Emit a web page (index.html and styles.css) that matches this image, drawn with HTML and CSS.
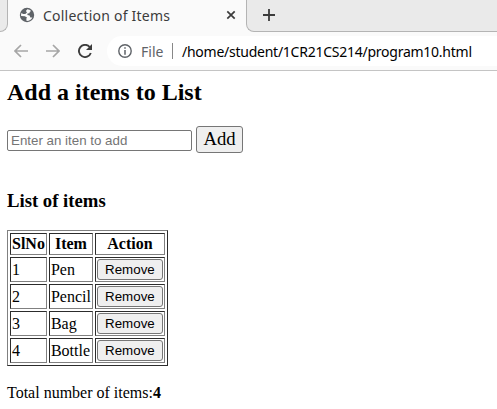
FILE: index.html
```html
<!DOCTYPE html>
<html lang="en">
<head>
<meta charset="utf-8">
<title>Collection of Items</title>
<link rel="stylesheet" href="styles.css">
</head>
<body>
<header class="browser">
  <div class="tabs">
    <div class="tab-before"></div>
    <div class="tab">
      <svg class="globe" width="16" height="16" viewBox="0 0 16 16"><circle cx="8" cy="8" r="7.2" fill="#5f6368"/><path d="M8.3 2.3 6.9 4.1 8 5.4 6.3 7H4.1L2.4 6.1A6 6 0 0 0 2.1 9l3.7.2 2.2 1.4-.7 1.2.3 2.3c2.8 0 4.7-1.4 5.8-3.5l-2-.1-.8-1.9-2.2-.7.1-1.4 1.9-.2.5-1.5 1.3-.8A6 6 0 0 0 8.3 2.3Z" fill="#fbfbfb"/></svg>
      <span class="tab-title">Collection of Items</span>
      <svg class="close" width="10" height="10" viewBox="0 0 10 10"><path d="m1.3 1.3 7.4 7.4m0-7.4L1.3 8.7" stroke="#3c3c3c" stroke-width="1.7"/></svg>
    </div>
    <div class="tab-after">
      <svg width="12" height="12" viewBox="0 0 12 12"><path d="M6 0v12M0 6h12" stroke="#3c3c3c" stroke-width="1.8"/></svg>
    </div>
  </div>
  <div class="toolbar">
    <svg class="arrow" width="14" height="14" viewBox="0 0 14 14"><path d="M14 7H1.5M7 1 1 7l6 6" fill="none" stroke="#a6a6a6" stroke-width="1.7"/></svg>
    <svg class="arrow forward" width="14" height="14" viewBox="0 0 14 14"><path d="M0 7h12.5M7 1l6 6-6 6" fill="none" stroke="#a6a6a6" stroke-width="1.7"/></svg>
    <svg class="reload" width="14" height="14" viewBox="0 0 14 14"><path d="M11.7 3A6.1 6.1 0 1 0 12.8 9" fill="none" stroke="#3c3c3c" stroke-width="1.9"/><path d="M14 0v6H8Z" fill="#3c3c3c"/></svg>
    <div class="address">
      <svg width="14" height="14" viewBox="0 0 14 14"><circle cx="7" cy="7" r="6.2" fill="none" stroke="#5f6368" stroke-width="1.4"/><path d="M7 3.2v1.5M7 6v4.7" stroke="#5f6368" stroke-width="1.5"/></svg>
      <span class="scheme">File</span>
      <span class="divider"></span>
      <span class="url">/home/student/1CR21CS214/program10.html</span>
    </div>
  </div>
</header>
<main>
  <h2>Add a items to List</h2>
  <div class="form"><input class="entry" type="text" placeholder="Enter an iten to add"> <button class="add">Add</button></div>
  <h3>List of items</h3>
  <table border="1">
    <tr><th>SlNo</th><th>Item</th><th>Action</th></tr>
    <tr><td>1</td><td>Pen</td><td><button>Remove</button></td></tr>
    <tr><td>2</td><td>Pencil</td><td><button>Remove</button></td></tr>
    <tr><td>3</td><td>Bag</td><td><button>Remove</button></td></tr>
    <tr><td>4</td><td>Bottle</td><td><button>Remove</button></td></tr>
  </table>
  <p>Total number of items:<b>4</b></p>
</main>
</body>
</html>
```
FILE: styles.css
```css
body {
  margin: 0;
  background: #fff;
  color: #000;
  font: 16px "Liberation Serif", serif;
  overflow: hidden;
}
svg { display: block; flex: none; }
.browser {
  height: 71px;
  box-sizing: border-box;
  border-bottom: 1px solid #c4c4c4;
  background: #fafafa;
  font-family: "Noto Sans", sans-serif;
  white-space: nowrap;
}
.tabs { display: flex; height: 32px; }
.tab-before, .tab-after {
  box-sizing: border-box;
  background: #eaeaea;
  border-bottom: 1px solid #b4b4b4;
}
.tab-before {
  width: 8px;
  border-right: 1px solid #b4b4b4;
  border-bottom-right-radius: 8px;
}
.tab {
  display: flex;
  width: 238px;
  height: 30px;
  align-items: center;
}
.globe { margin-left: 11px; }
.tab-title {
  width: 128px;
  margin-left: 8px;
  color: #3c3c3c;
  font-size: 14px;
  letter-spacing: 0.22px;
}
.close { margin-left: 55px; }
.tab-after {
  flex: 1;
  padding: 9px 0 0 16px;
  border-left: 1px solid #b4b4b4;
  border-bottom-left-radius: 8px;
}
.toolbar { display: flex; height: 38px; align-items: center; }
.arrow { margin-left: 14px; }
.forward { margin-left: 18px; }
.reload { margin-left: 18px; }
.address {
  display: flex;
  flex: 1;
  height: 30px;
  margin-left: 15px;
  padding-left: 11px;
  align-items: center;
  background: #fff;
  border-radius: 15px 0 0 15px;
  font-size: 14px;
}
.scheme { width: 31px; margin-left: 9px; color: #5f6368; }
.divider { width: 1px; height: 16px; background: #888; }
.url { margin-left: 9px; letter-spacing: -0.25px; }
main { padding: 8px 7px 0; }
h2 { margin: 0 0 20px; font-size: 24px; line-height: 27px; }
.form { display: flex; height: 27px; gap: 4px; }
input, button { box-sizing: border-box; font: 13.333px "Liberation Sans", sans-serif; }
.entry {
  width: 185px;
  height: 21px;
  margin: 4px 0 0;
  padding: 1px 3px;
  border: 1px solid #767676;
  border-radius: 2px;
}
button {
  display: block;
  width: 66px;
  height: 21px;
  padding: 0;
  border: 1px solid #767676;
  border-radius: 3px;
  background: #efefef;
  color: #000;
}
.add {
  width: 47px;
  height: 27px;
  padding-bottom: 2px;
  font: 18.667px "Liberation Serif", serif;
}
h3 { margin: 37px 0 19px; font-size: 18.72px; line-height: 21px; }
p { margin: 18px 0 0; line-height: 18px; }
```
